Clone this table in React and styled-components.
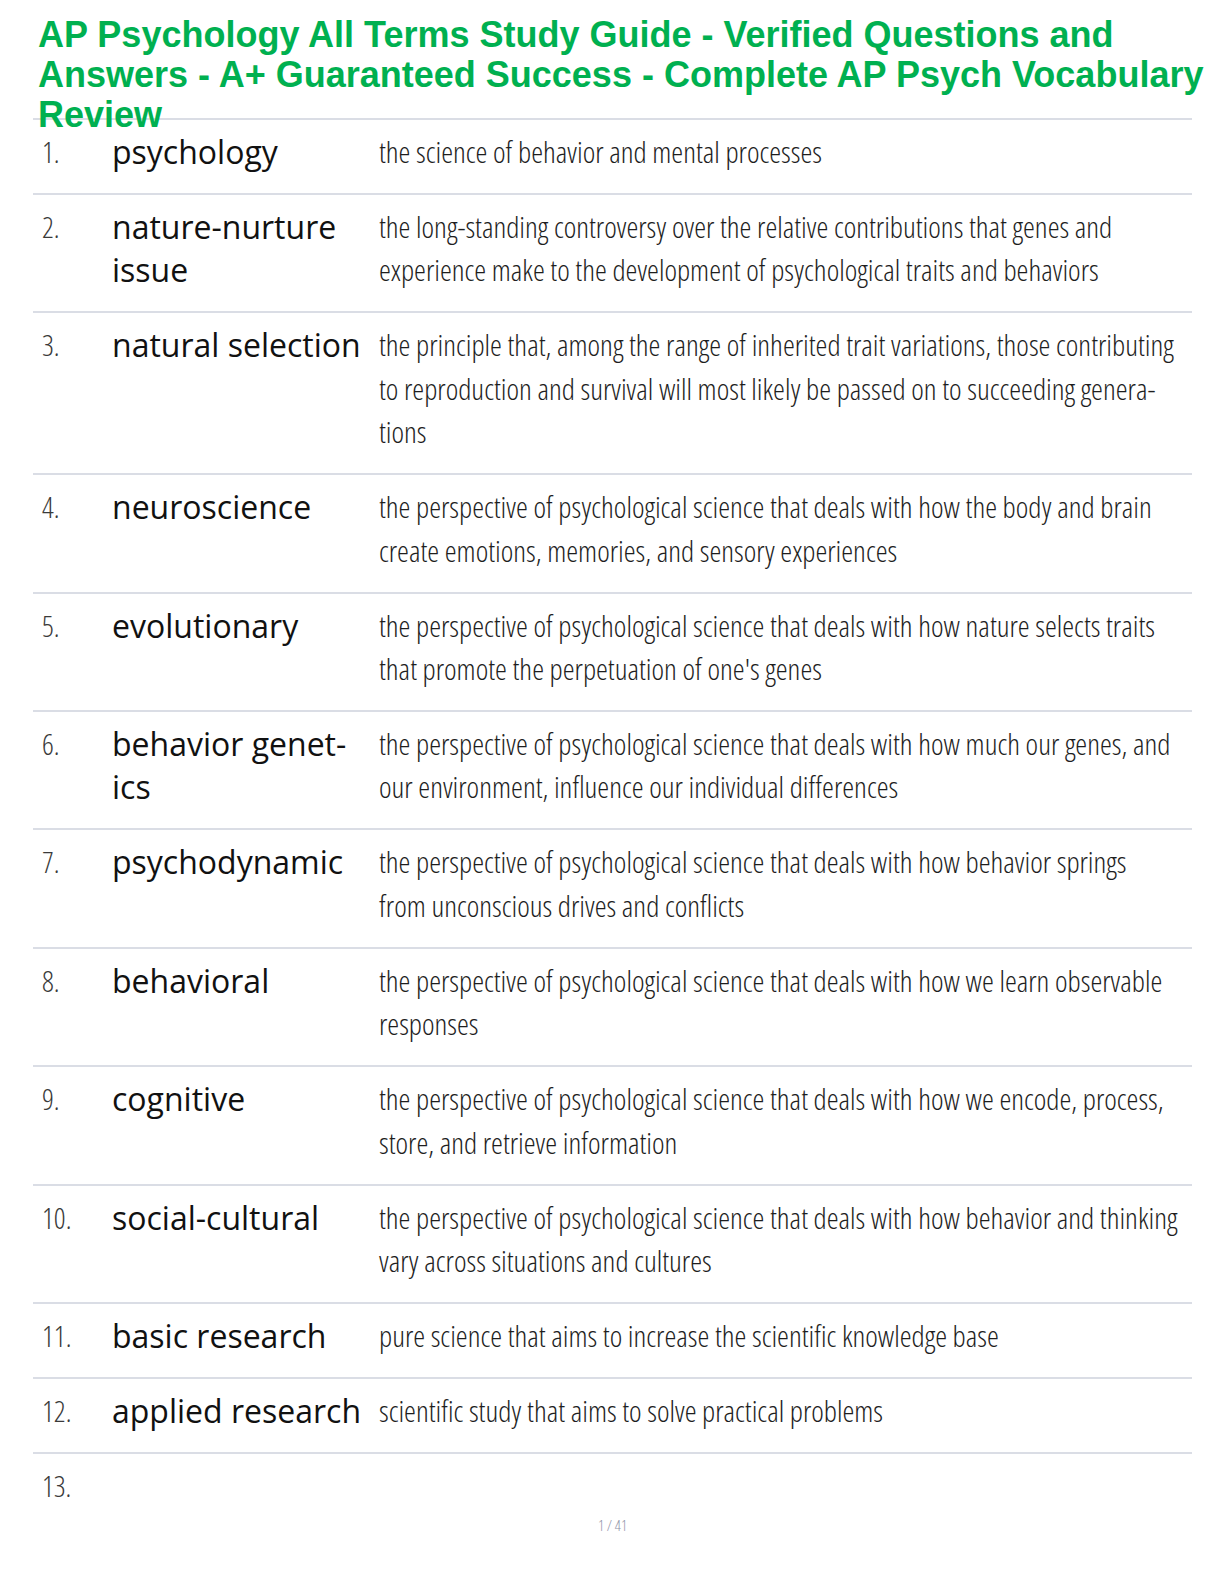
import React from "react";
import styled, { createGlobalStyle } from "styled-components";

const Global = createGlobalStyle`
  html, body { margin: 0; padding: 0; background: #ffffff; }
  body { font-family: "Open Sans", "Liberation Sans", sans-serif; }
`;

const Page = styled.div`
  width: 1224px;
  min-height: 1584px;
  box-sizing: border-box;
  padding: 15px 32px 0 33px;
`;

const Title = styled.h1`
  margin: 0 -32px 0 0;
  height: 103px;
  padding-left: 5px;
  font-family: "Liberation Sans", Arial, sans-serif;
  font-weight: 700;
  font-size: 36px;
  line-height: 40px;
  color: #00b050;
  position: relative;
  z-index: 1;
`;

const Table = styled.div`
  display: flex;
  flex-direction: column;
`;

const Row = styled.div`
  display: grid;
  grid-template-columns: 79px 267px 1fr;
  border-top: 2px solid #dadde5;
  padding: 10px 0 ${(p) => (p.$last ? 0 : 19.4)}px;
  line-height: 43.5px;
`;

const Num = styled.div`
  padding-left: 9px;
  font-family: "Open Sans", sans-serif;
  font-weight: 300;
  font-stretch: 75%;
  font-size: 29px;
  color: #3a3a3a;
`;

const Term = styled.div`
  font-family: "Open Sans", sans-serif;
  font-weight: 400;
  font-size: 32px;
  color: #111111;
`;

const Def = styled.div`
  font-family: "Open Sans", sans-serif;
  font-weight: 300;
  font-stretch: 77%;
  font-size: 30px;
  color: #1e1e1e;
`;

const Line = styled.span`
  display: block;
  white-space: nowrap;
`;

const Footer = styled.div`
  margin-top: 9px;
  text-align: center;
  font-family: "Open Sans", sans-serif;
  font-weight: 300;
  font-stretch: 75%;
  font-size: 15px;
  line-height: 18px;
  color: #8f94a8;
`;

const P = "the perspective of psychological science that deals with how";

const rows = [
  { t: ["psychology"], d: ["the science of behavior and mental processes"] },
  {
    t: ["nature-nurture", "issue"],
    d: [
      "the long-standing controversy over the relative contributions that genes and",
      "experience make to the development of psychological traits and behaviors",
    ],
  },
  {
    t: ["natural selection"],
    d: [
      "the principle that, among the range of inherited trait variations, those contributing",
      "to reproduction and survival will most likely be passed on to succeeding genera-",
      "tions",
    ],
  },
  {
    t: ["neuroscience"],
    d: [`${P} the body and brain`, "create emotions, memories, and sensory experiences"],
  },
  {
    t: ["evolutionary"],
    d: [`${P} nature selects traits`, "that promote the perpetuation of one's genes"],
  },
  {
    t: ["behavior genet-", "ics"],
    d: [`${P} much our genes, and`, "our environment, influence our individual differences"],
  },
  {
    t: ["psychodynamic"],
    d: [`${P} behavior springs`, "from unconscious drives and conflicts"],
  },
  {
    t: ["behavioral"],
    d: [`${P} we learn observable`, "responses"],
  },
  {
    t: ["cognitive"],
    d: [`${P} we encode, process,`, "store, and retrieve information"],
  },
  {
    t: ["social-cultural"],
    d: [`${P} behavior and thinking`, "vary across situations and cultures"],
  },
  { t: ["basic research"], d: ["pure science that aims to increase the scientific knowledge base"] },
  { t: ["applied research"], d: ["scientific study that aims to solve practical problems"] },
];

export default function App() {
  return (
    <Page>
      <Global />
      <Title>
        AP Psychology All Terms Study Guide - Verified Questions and Answers - A+ Guaranteed
        Success - Complete AP Psych Vocabulary Review
      </Title>
      <Table>
        {rows.map((r, i) => (
          <Row key={i}>
            <Num>{i + 1}.</Num>
            <Term>
              {r.t.map((l, j) => (
                <Line key={j}>{l}</Line>
              ))}
            </Term>
            <Def>
              {r.d.map((l, j) => (
                <Line key={j}>{l}</Line>
              ))}
            </Def>
          </Row>
        ))}
        <Row $last>
          <Num>13.</Num>
          <Term />
          <Def />
        </Row>
      </Table>
      <Footer>1 / 41</Footer>
    </Page>
  );
}
